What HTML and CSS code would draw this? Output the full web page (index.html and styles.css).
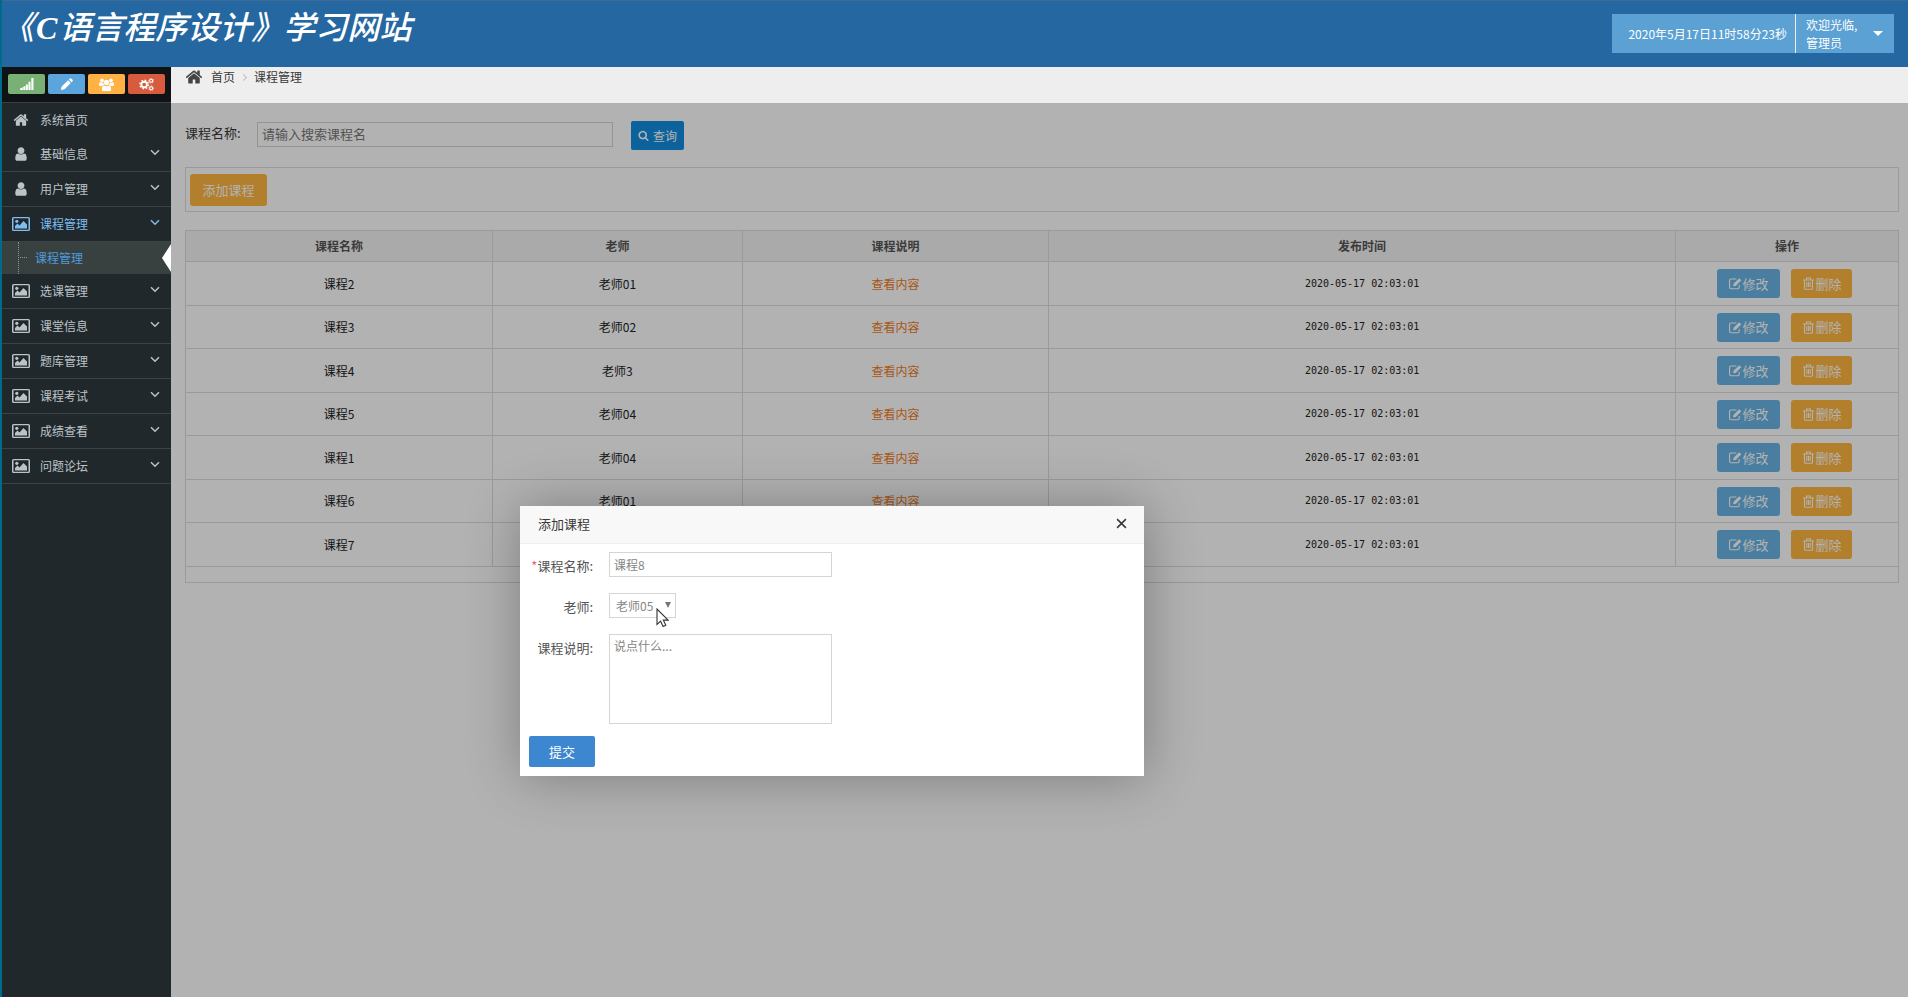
FILE: index.html
```html
<!DOCTYPE html>
<html lang="zh-CN">
<head>
<meta charset="utf-8">
<title>《C语言程序设计》学习网站</title>
<link rel="stylesheet" href="styles.css">
</head>
<body>
<svg class="sprite" aria-hidden="true">
  <symbol id="home" viewBox="0 0 1792 1792"><path d="M1472 992v480q0 26-19 45t-45 19h-384v-384h-256v384h-384q-26 0-45-19t-19-45v-480q0-1 .5-3t.5-3l575-474 575 474q1 2 1 6zm223-69l-62 74q-8 9-21 11h-3q-13 0-21-7l-692-577-692 577q-12 8-24 7-13-2-21-11l-62-74q-8-10-7-23.5t11-21.5l719-599q32-26 76-26t76 26l244 204v-195q0-14 9-23t23-9h192q14 0 23 9t9 23v408l219 182q10 8 11 21.5t-7 23.5z"/></symbol>
  <symbol id="user" viewBox="0 0 1792 1792"><path d="M1536 1399q0 109-62.500 187t-150.500 78h-854q-88 0-150.500-78t-62.500-187q0-85 8.500-160.500t31.500-152 58.500-131 94-89 134.500-34.500q131 128 313 128t313-128q76 0 134.500 34.500t94 89 58.500 131 31.500 152 8.500 160.500zm-256-887q0 159-112.500 271.500t-271.500 112.500-271.500-112.500-112.500-271.500 112.500-271.500 271.500-112.500 271.500 112.500 112.500 271.500z"/></symbol>
  <symbol id="picture" viewBox="0 0 18 14"><path fill-rule="evenodd" d="M1.500 0h15A1.500 1.500 0 0 1 18 1.500v11a1.500 1.500 0 0 1-1.500 1.500h-15A1.500 1.500 0 0 1 0 12.500v-11A1.500 1.500 0 0 1 1.500 0zm0 1.300v11.400h15V1.300z"/><circle cx="4.800" cy="4.300" r="1.600"/><path d="M3 11.500V9l2.500-2.500 2 2L11.500 4 15 7.500v4z"/></symbol>
  <symbol id="chevron" viewBox="0 0 10 7"><path d="M1 1.200l4 4 4-4" fill="none" stroke="currentColor" stroke-width="1.500"/></symbol>
  <symbol id="signal" viewBox="0 0 16 14"><path d="M1 11.500l3-1.500v3H1zM4.500 9.500l2.300-1V13H4.500zM7.300 7h2.200v6H7.300zM10.100 4h2.200v9h-2.200zM13.200 0h2.300v13h-2.300z"/></symbol>
  <symbol id="pencil" viewBox="0 0 14 14"><path d="M1 13l.8-3.800L8.700 2.300l3 3-6.900 6.900zM9.500 1.500L10.600.5q.7-.6 1.400 0l1.500 1.500q.6.700 0 1.400l-1.100 1.100z"/></symbol>
  <symbol id="group" viewBox="0 0 16 14"><circle cx="3.200" cy="2.500" r="2"/><circle cx="12.800" cy="2.500" r="2"/><circle cx="8" cy="4.800" r="2.800"/><path d="M0 8V6q0-1.500 1.500-1.500 2 .8 3 .3 0 1.700 1 2.700-1.500 0-2.300 1H1Q0 8.500 0 8zM16 8V6q0-1.500-1.500-1.500-2 .8-3 .3 0 1.700-1 2.700 1.500 0 2.300 1H15q1 0 1-.5zM3 12q0-3.700 2.300-4 2.700 1.500 5.400 0Q13 8.300 13 12q0 2-1.800 2H4.800Q3 14 3 12z"/></symbol>
  <symbol id="cogs" viewBox="0 0 16 14"><g fill="none" stroke="currentColor"><circle cx="5.500" cy="7" r="3" stroke-width="2"/><circle cx="5.500" cy="7" r="4.600" stroke-width="1.500" stroke-dasharray="1.800 1.800"/><circle cx="13" cy="3" r="1.600" stroke-width="1.200"/><circle cx="13" cy="3" r="2.600" stroke-width=".9" stroke-dasharray="1 1"/><circle cx="13" cy="11" r="1.600" stroke-width="1.200"/><circle cx="13" cy="11" r="2.600" stroke-width=".9" stroke-dasharray="1 1"/></g></symbol>
  <symbol id="search" viewBox="0 0 1792 1792"><path d="M1216 832q0-185-131.500-316.500t-316.500-131.500-316.500 131.500-131.500 316.500 131.500 316.500 316.500 131.500 316.500-131.500 131.500-316.500zm512 832q0 52-38 90t-90 38q-54 0-90-38l-343-342q-179 124-399 124-143 0-273.500-55.500t-225-150-150-225-55.500-273.500 55.500-273.500 150-225 225-150 273.500-55.500 273.500 55.500 225 150 150 225 55.500 273.500q0 220-124 399l343 343q37 37 37 90z"/></symbol>
  <symbol id="edit" viewBox="0 0 14 13"><path d="M11 8v2.500a1.600 1.600 0 0 1-1.600 1.600H2.200A1.600 1.600 0 0 1 .6 10.500V3.200a1.600 1.600 0 0 1 1.600-1.600H8" fill="none" stroke="currentColor" stroke-width="1.200"/><path d="M4.500 9.500l.4-2.700L11 .8 13.300 3 7.200 9.100z"/></symbol>
  <symbol id="trash" viewBox="0 0 12 13"><path d="M.5 3h11M4 3V1h4v2M2 3v8.300q0 1 1 1h6q1 0 1-1V3M4.300 5v5M6 5v5M7.700 5v5" fill="none" stroke="currentColor" stroke-width="1.100"/></symbol>
</svg>

<div class="app">
  <header class="topbar">
    <h1 class="brand">《<span class="brand-letter">C</span>语言程序设计》学习网站</h1>
    <div class="userbox">
      <span class="clock">2020年5月17日11时58分23秒</span>
      <button class="account" type="button"><span>欢迎光临,<br>管理员</span><i class="caret"></i></button>
    </div>
  </header>

  <div class="body">
    <aside class="sidebar">
      <div class="shortcuts">
        <button class="shortcut green" type="button" aria-label="统计"><svg><use href="#signal"/></svg></button>
        <button class="shortcut blue" type="button" aria-label="编辑"><svg><use href="#pencil"/></svg></button>
        <button class="shortcut orange" type="button" aria-label="用户"><svg><use href="#group"/></svg></button>
        <button class="shortcut red" type="button" aria-label="设置"><svg><use href="#cogs"/></svg></button>
      </div>
      <nav class="menu">
        <a class="item plain" href="#"><svg class="ico"><use href="#home"/></svg><span>系统首页</span></a>
        <a class="item" href="#"><svg class="ico"><use href="#user"/></svg><span>基础信息</span><svg class="chev"><use href="#chevron"/></svg></a>
        <a class="item" href="#"><svg class="ico"><use href="#user"/></svg><span>用户管理</span><svg class="chev"><use href="#chevron"/></svg></a>
        <a class="item open" href="#"><svg class="ico"><use href="#picture"/></svg><span>课程管理</span><svg class="chev"><use href="#chevron"/></svg></a>
        <a class="subitem" href="#"><i class="branch"></i>课程管理</a>
        <a class="item" href="#"><svg class="ico"><use href="#picture"/></svg><span>选课管理</span><svg class="chev"><use href="#chevron"/></svg></a>
        <a class="item" href="#"><svg class="ico"><use href="#picture"/></svg><span>课堂信息</span><svg class="chev"><use href="#chevron"/></svg></a>
        <a class="item" href="#"><svg class="ico"><use href="#picture"/></svg><span>题库管理</span><svg class="chev"><use href="#chevron"/></svg></a>
        <a class="item" href="#"><svg class="ico"><use href="#picture"/></svg><span>课程考试</span><svg class="chev"><use href="#chevron"/></svg></a>
        <a class="item" href="#"><svg class="ico"><use href="#picture"/></svg><span>成绩查看</span><svg class="chev"><use href="#chevron"/></svg></a>
        <a class="item" href="#"><svg class="ico"><use href="#picture"/></svg><span>问题论坛</span><svg class="chev"><use href="#chevron"/></svg></a>
      </nav>
    </aside>

    <main class="main">
      <nav class="crumbs">
        <svg class="crumb-home"><use href="#home"/></svg>
        <a href="#">首页</a><i class="sep"></i><a href="#">课程管理</a>
      </nav>
      <section class="page">
        <form class="search">
          <label for="keyword">课程名称:</label>
          <input id="keyword" type="text" placeholder="请输入搜索课程名">
          <button class="query" type="button"><svg><use href="#search"/></svg>查询</button>
        </form>
        <div class="toolbar"><button class="btn warn add" type="button">添加课程</button></div>
        <div class="table-box">
          <table class="grid">
            <colgroup><col class="c1"><col class="c2"><col class="c3"><col class="c4"><col class="c5"></colgroup>
            <thead><tr><th>课程名称</th><th>老师</th><th>课程说明</th><th>发布时间</th><th>操作</th></tr></thead>
            <tbody>
              <tr><td>课程2</td><td>老师01</td><td><a href="#">查看内容</a></td><td class="time">2020-05-17 02:03:01</td><td><div class="ops"><button class="btn info" type="button"><svg><use href="#edit"/></svg>修改</button><button class="btn warn" type="button"><svg><use href="#trash"/></svg>删除</button></div></td></tr>
              <tr><td>课程3</td><td>老师02</td><td><a href="#">查看内容</a></td><td class="time">2020-05-17 02:03:01</td><td><div class="ops"><button class="btn info" type="button"><svg><use href="#edit"/></svg>修改</button><button class="btn warn" type="button"><svg><use href="#trash"/></svg>删除</button></div></td></tr>
              <tr><td>课程4</td><td>老师3</td><td><a href="#">查看内容</a></td><td class="time">2020-05-17 02:03:01</td><td><div class="ops"><button class="btn info" type="button"><svg><use href="#edit"/></svg>修改</button><button class="btn warn" type="button"><svg><use href="#trash"/></svg>删除</button></div></td></tr>
              <tr><td>课程5</td><td>老师04</td><td><a href="#">查看内容</a></td><td class="time">2020-05-17 02:03:01</td><td><div class="ops"><button class="btn info" type="button"><svg><use href="#edit"/></svg>修改</button><button class="btn warn" type="button"><svg><use href="#trash"/></svg>删除</button></div></td></tr>
              <tr><td>课程1</td><td>老师04</td><td><a href="#">查看内容</a></td><td class="time">2020-05-17 02:03:01</td><td><div class="ops"><button class="btn info" type="button"><svg><use href="#edit"/></svg>修改</button><button class="btn warn" type="button"><svg><use href="#trash"/></svg>删除</button></div></td></tr>
              <tr><td>课程6</td><td>老师01</td><td><a href="#">查看内容</a></td><td class="time">2020-05-17 02:03:01</td><td><div class="ops"><button class="btn info" type="button"><svg><use href="#edit"/></svg>修改</button><button class="btn warn" type="button"><svg><use href="#trash"/></svg>删除</button></div></td></tr>
              <tr><td>课程7</td><td></td><td></td><td class="time">2020-05-17 02:03:01</td><td><div class="ops"><button class="btn info" type="button"><svg><use href="#edit"/></svg>修改</button><button class="btn warn" type="button"><svg><use href="#trash"/></svg>删除</button></div></td></tr>
            </tbody>
          </table>
        </div>
        <div class="shade"></div>
      </section>
    </main>
  </div>
</div>

<div class="dialog" role="dialog" aria-labelledby="dialog-title">
  <div class="dialog-head">
    <span id="dialog-title">添加课程</span>
    <button class="close" type="button" aria-label="关闭"><svg viewBox="0 0 10 10"><path d="M1 1l8 8M9 1l-8 8" stroke="currentColor" stroke-width="1.400"/></svg></button>
  </div>
  <form class="dialog-body">
    <div class="field"><label for="course"><b>*</b>课程名称:</label><input id="course" type="text" value="课程8"></div>
    <div class="field"><label for="teacher">老师:</label><span class="select"><select id="teacher"><option>老师05</option></select><i></i></span></div>
    <div class="field"><label for="intro">课程说明:</label><textarea id="intro" placeholder="说点什么..."></textarea></div>
    <button class="submit" type="button">提交</button>
  </form>
</div>
<svg class="pointer" viewBox="0 0 13 20" aria-hidden="true"><path d="M1 1v15.500l3.600-3.300 2.500 5.300 2.700-1.200-2.500-5.200h4.800z" fill="#fff" stroke="#333" stroke-width="1.100"/></svg>
</body>
</html>
```
FILE: styles.css
```css
* { box-sizing: border-box; }
body {
  margin: 0;
  font: 12px/18px "Noto Sans CJK SC", "Noto Sans", sans-serif;
  color: #393939;
  background: #fff;
}
a { color: inherit; text-decoration: none; }
button, input, select, textarea { font: inherit; color: inherit; margin: 0; }
button { border: 0; padding: 0; }
svg { fill: currentColor; display: block; flex: none; }
.sprite { position: absolute; width: 0; height: 0; }

.app { display: flex; flex-direction: column; min-height: 100vh; border-left: 2px solid #006b88; }

.topbar {
  display: flex;
  justify-content: space-between;
  align-items: flex-start;
  height: 67px;
  padding-right: 14px;
  background: #2567a1;
  border-top: 1px solid #3b6a96;
}
.brand {
  margin: 0;
  font: italic 500 32px/48px "Noto Sans CJK SC", sans-serif;
  color: #fff;
}
.brand-letter { font-family: "Liberation Serif", serif; font-weight: 700; padding: 0 2px; }
.userbox { display: flex; height: 39px; margin-top: 13px; background: #5ba1d3; color: #fff; }
.clock { padding: 0 8px 0 16px; line-height: 40px; border-right: 1px solid #f0eee4; }
.account {
  display: flex;
  justify-content: space-between;
  align-items: center;
  width: 98px;
  padding: 0 11px 0 10px;
  text-align: left;
  background: none;
}
.caret { border: 5px solid transparent; border-top-color: #fff; border-bottom: 0; }

.body { flex: 1; display: flex; }
.sidebar { width: 169px; flex: none; background: #20282b; color: #bcc3c8; }
.shortcuts { display: flex; gap: 3px; height: 35px; padding: 7px 6px; background: #101315; }
.shortcut {
  display: flex;
  justify-content: center;
  align-items: center;
  width: 37px;
  height: 20px;
  color: #fff;
  border-radius: 2px;
}
.shortcut svg { width: 15px; height: 13px; }
.green { background: #79b073; }
.blue { background: #5ba4dc; }
.orange { background: #ffb143; }
.red { background: #d75b3c; }

.menu { display: flex; flex-direction: column; border-top: 1px solid #3a4144; }
.item {
  display: flex;
  align-items: center;
  height: 35px;
  padding: 0 11px 0 10px;
  border-bottom: 1px solid #3c4346;
}
.plain { height: 34px; border-bottom-color: transparent; }
.ico { width: 18px; height: 16px; margin-right: 10px; }
.chev { width: 10px; height: 7px; margin: 0 0 3px auto; }
.open { color: #7fbdf0; }
.subitem {
  position: relative;
  height: 32px;
  padding-left: 33px;
  line-height: 32px;
  color: #4e9bdc;
  background: #394140;
}
.branch { position: absolute; left: 18px; top: 15px; width: 7px; border-top: 1px dotted #8c9391; }
.subitem::before {
  content: "";
  position: absolute;
  left: 16px;
  top: 0;
  bottom: 0;
  border-left: 1px dotted #8c9391;
}
.subitem::after {
  content: "";
  position: absolute;
  right: 0;
  top: 2px;
  border: 14px solid transparent;
  border-right: 9px solid #fff;
  border-left: 0;
}

.main { flex: 1; min-width: 0; display: flex; flex-direction: column; }
.crumbs {
  display: flex;
  align-items: flex-start;
  height: 36px;
  padding: 1px 14px;
  background: #efeeef;
}
.crumb-home { width: 18px; height: 18px; margin-right: 8px; color: #444; }
.sep {
  width: 5px;
  height: 5px;
  margin: 7px 8px 0 6px;
  border: solid #c4bcc0;
  border-width: 1px 1px 0 0;
  transform: rotate(45deg);
}

.page { position: relative; flex: 1; padding: 18px 9px 0 14px; background: #fff; }
.shade { position: absolute; inset: 0; background: rgba(0, 0, 0, .3); }
.search { display: flex; align-items: flex-start; font-size: 13px; }
.search label { width: 72px; line-height: 24px; }
.search input {
  width: 356px;
  height: 25px;
  margin: 1px 18px 0 0;
  padding: 0 4px 2px;
  border: 1px solid #d5d5d5;
  background: none;
}
.search input::placeholder { color: #777; }
.query {
  display: flex;
  align-items: center;
  justify-content: center;
  gap: 4px;
  width: 53px;
  height: 29px;
  color: #fff;
  font-size: 12px;
  background: #108de0;
  border-radius: 2px;
}
.query svg { width: 11px; height: 11px; }

.toolbar { height: 45px; margin-top: 17px; padding: 6px 4px; border: 1px solid #ddd; }
.btn {
  display: flex;
  align-items: center;
  justify-content: center;
  height: 29px;
  color: #fff;
  font-size: 13px;
  border-radius: 3px;
}
.btn svg { width: 13px; height: 13px; }
.info { width: 63px; background: #6bb5e6; }
.warn { width: 61px; background: #ffb63f; }
.add { width: 77px; height: 32px; }

.table-box { margin-top: 18px; padding-bottom: 15px; border: 1px solid #ddd; border-top: 0; }
.grid { width: 100%; table-layout: fixed; border-collapse: collapse; text-align: center; color: #222; }
.c1 { width: 17.9%; }
.c2 { width: 14.6%; }
.c3 { width: 17.9%; }
.c4 { width: 36.6%; }
.c5 { width: 13%; }
.grid th { height: 31px; padding: 0; color: #555; background: #f4f4f4; }
.grid th, .grid td { border: 1px solid #ddd; }
.grid th:first-child, .grid td:first-child { border-left: 0; }
.grid th:last-child, .grid td:last-child { border-right: 0; }
.grid td { height: 44px; padding: 0; }
.grid tr:nth-child(even) td { height: 43px; }
.grid a { color: #f27a1a; }
.grid .time { font: 10px/18px "DejaVu Sans Mono", monospace; }
.ops { display: flex; justify-content: center; gap: 11px; padding-right: 4px; }

.dialog {
  position: absolute;
  left: 520px;
  top: 506px;
  width: 624px;
  background: #fff;
  font-size: 13px;
  box-shadow: 1px 1px 50px rgba(0, 0, 0, .3);
}
.dialog-head {
  display: flex;
  align-items: center;
  justify-content: space-between;
  height: 38px;
  padding: 0 17px 2px 18px;
  background: #f8f8f8;
  border-bottom: 1px solid #eee;
}
.close { background: none; }
.close svg { width: 11px; height: 11px; }
.dialog-body { display: flex; flex-direction: column; gap: 16px; padding: 8px 9px 9px; }
.field { display: flex; align-items: flex-start; gap: 16px; min-height: 25px; color: #555; }
.field label { width: 64px; height: 25px; text-align: right; line-height: 28px; white-space: nowrap; }
.field b { color: #f0607a; font-weight: 400; }
.field input, .field textarea, .field select {
  width: 223px;
  height: 25px;
  padding: 0 4px;
  color: #858585;
  font-size: 12px;
  background: #fff;
  border: 1px solid #d5d5d5;
  border-radius: 0;
}
.field textarea { display: block; height: 90px; padding-top: 2px; resize: none; }
.field textarea::placeholder { color: #858585; }
.select { position: relative; }
.field select { display: block; width: 67px; padding: 0 6px; appearance: none; }
.select i {
  position: absolute;
  right: 5px;
  top: 9px;
  border: 3px solid transparent;
  border-top: 6px solid #777;
  border-bottom: 0;
}
.submit {
  width: 66px;
  height: 31px;
  margin-top: -4px;
  color: #fff;
  background: #3d87d1;
  border-radius: 2px;
}
.pointer { position: absolute; left: 656px; top: 608px; width: 13px; height: 20px; }
```
